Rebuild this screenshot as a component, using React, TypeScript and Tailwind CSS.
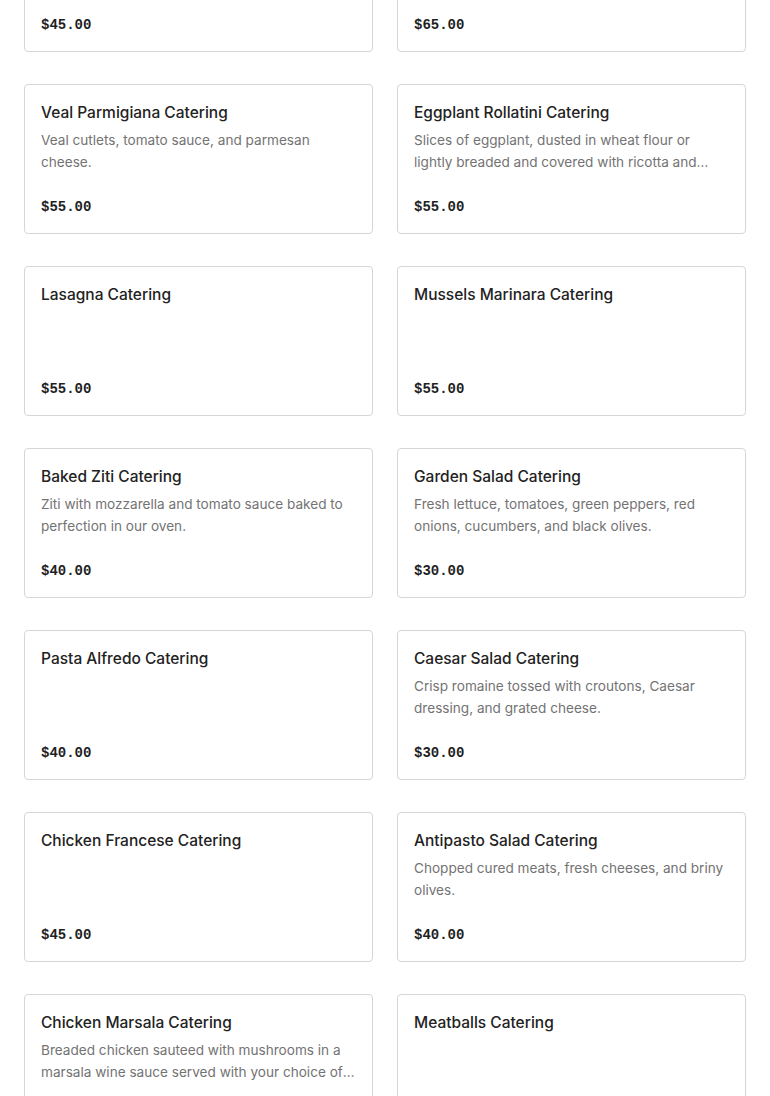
type MenuItem = {
  name: string;
  description?: string;
  price: string;
};

const menuItems: MenuItem[] = [
  { name: "Chicken Parmigiana Catering", price: "$45.00" },
  { name: "Shrimp Scampi Catering", price: "$65.00" },
  {
    name: "Veal Parmigiana Catering",
    description: "Veal cutlets, tomato sauce, and parmesan cheese.",
    price: "$55.00",
  },
  {
    name: "Eggplant Rollatini Catering",
    description:
      "Slices of eggplant, dusted in wheat flour or lightly breaded and covered with ricotta and mozzarella cheese.",
    price: "$55.00",
  },
  { name: "Lasagna Catering", price: "$55.00" },
  { name: "Mussels Marinara Catering", price: "$55.00" },
  {
    name: "Baked Ziti Catering",
    description: "Ziti with mozzarella and tomato sauce baked to perfection in our oven.",
    price: "$40.00",
  },
  {
    name: "Garden Salad Catering",
    description: "Fresh lettuce, tomatoes, green peppers, red onions, cucumbers, and black olives.",
    price: "$30.00",
  },
  { name: "Pasta Alfredo Catering", price: "$40.00" },
  {
    name: "Caesar Salad Catering",
    description: "Crisp romaine tossed with croutons, Caesar dressing, and grated cheese.",
    price: "$30.00",
  },
  { name: "Chicken Francese Catering", price: "$45.00" },
  {
    name: "Antipasto Salad Catering",
    description: "Chopped cured meats, fresh cheeses, and briny olives.",
    price: "$40.00",
  },
  {
    name: "Chicken Marsala Catering",
    description:
      "Breaded chicken sauteed with mushrooms in a marsala wine sauce served with your choice of pasta.",
    price: "$45.00",
  },
  { name: "Meatballs Catering", price: "$40.00" },
];

function MenuCard({ item }: { item: MenuItem }) {
  return (
    <div className="flex h-[150px] flex-col rounded border border-[#d6d6d6] bg-white p-4">
      <p className="text-[15.5px] leading-6 font-medium text-[#222222]">{item.name}</p>
      {item.description && (
        <p className="mt-1 line-clamp-2 text-[13.6px] leading-[22px] text-[#737373]">
          {item.description}
        </p>
      )}
      <p className="mt-auto font-['Liberation_Mono',monospace] text-[14px] leading-5 font-bold text-[#1f1f1f]">
        {item.price}
      </p>
    </div>
  );
}

export default function App() {
  return (
    <div className="h-[1096px] overflow-hidden bg-white font-['Inter',sans-serif]">
      <div className="-mt-[98px] grid grid-cols-2 gap-x-6 gap-y-8 px-6">
        {menuItems.map((item) => (
          <MenuCard key={item.name} item={item} />
        ))}
      </div>
    </div>
  );
}
